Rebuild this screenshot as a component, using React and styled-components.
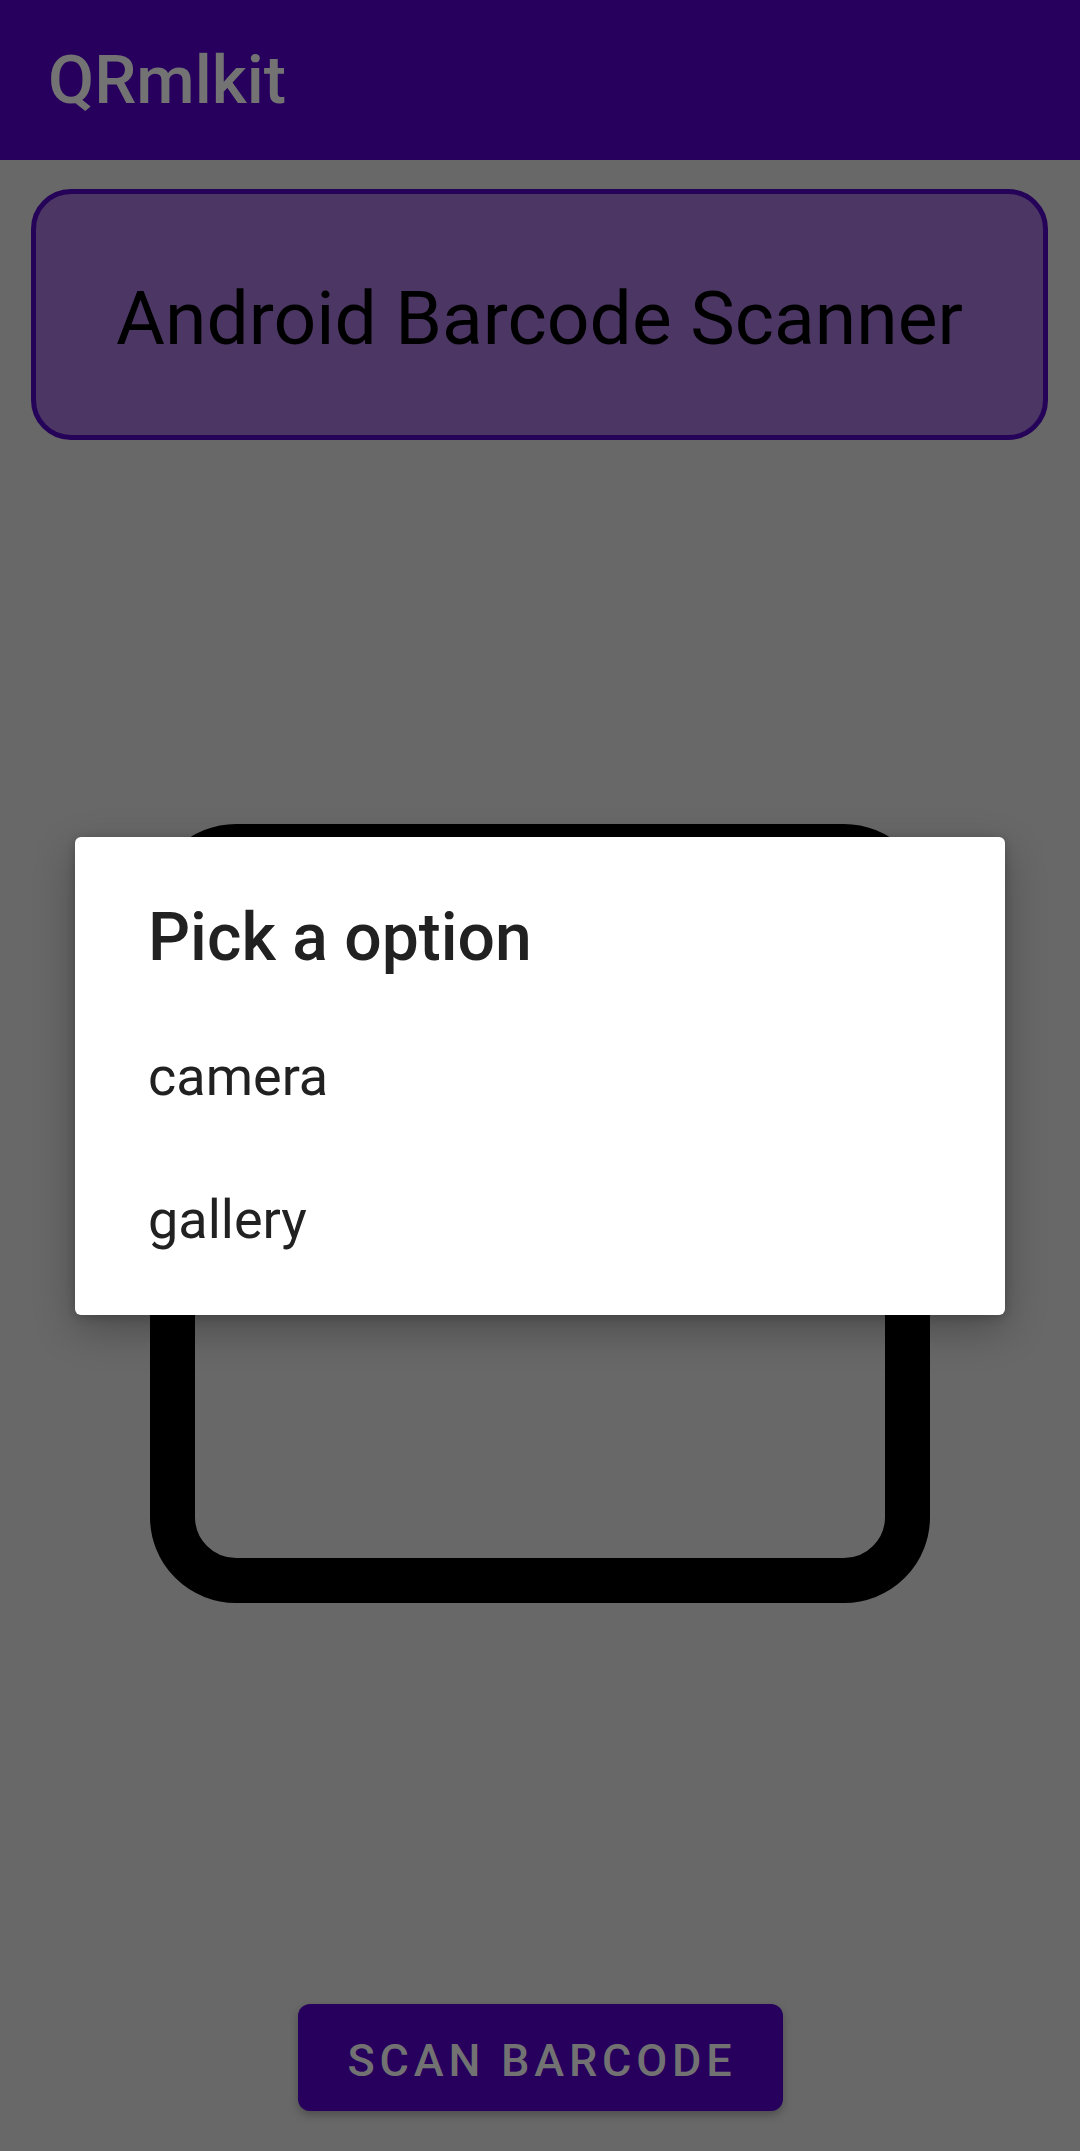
import React from "react";
import styled, { createGlobalStyle } from "styled-components";

const Global = createGlobalStyle`
  html, body { margin: 0; padding: 0; }
  body {
    background: #686868;
    font-family: Roboto, "Noto Sans", "Liberation Sans", sans-serif;
    -webkit-font-smoothing: antialiased;
  }
  * { box-sizing: border-box; }
`;

const Page = styled.div`
  position: relative;
  width: 1080px;
  height: 2151px;
  background: #686868;
  display: flex;
  flex-direction: column;
  overflow: hidden;
`;

const AppBar = styled.header`
  height: 160px;
  background: #27005e;
  display: flex;
  align-items: center;
  padding-left: 48px;
  flex-shrink: 0;
`;

const AppTitle = styled.h1`
  margin: 0;
  font-size: 67px;
  font-weight: 500;
  line-height: 160px;
  color: #737373;
`;

const Main = styled.main`
  display: flex;
  flex-direction: column;
  align-items: center;
`;

const HeaderCard = styled.div`
  margin: 29px 32px 0 31px;
  align-self: stretch;
  height: 251px;
  border: 5px solid #250359;
  border-radius: 40px;
  background: #4b3664;
  display: flex;
  align-items: center;
  justify-content: center;
`;

const HeaderText = styled.div`
  font-size: 75px;
  font-weight: 400;
  color: #000;
  padding-top: 6px;
`;

const ScanFrame = styled.div`
  margin-top: 384px;
  width: 780px;
  height: 779px;
  border: 45px solid #000;
  border-radius: 86px;
`;

const ScanButton = styled.button`
  margin-top: 401px;
  width: 485px;
  height: 107px;
  border: none;
  border-radius: 12px;
  background: #27005e;
  color: #727272;
  font-family: Roboto, "Liberation Sans", sans-serif;
  font-size: 45px;
  font-weight: 500;
  letter-spacing: 4.8px;
  text-transform: uppercase;
  padding: 6px 0 0 4px;
  box-shadow: 0 4px 8px rgba(0, 0, 0, 0.25);
`;

const Overlay = styled.div`
  position: absolute;
  inset: 0;
  display: flex;
  align-items: center;
  justify-content: center;
`;

const Dialog = styled.div`
  width: 930px;
  height: 478px;
  background: #fff;
  border-radius: 6px;
  box-shadow: 0 14px 40px rgba(0, 0, 0, 0.28), 0 2px 10px rgba(0, 0, 0, 0.2);
  padding: 61px 0 24px 0;
  display: flex;
  flex-direction: column;
`;

const DialogTitle = styled.h2`
  margin: 0 0 27px 0;
  padding-left: 73px;
  font-size: 66px;
  font-weight: 500;
  line-height: 80px;
  color: #212121;
`;

const OptionItem = styled.div`
  padding-left: 73px;
  font-size: 54px;
  font-weight: 400;
  line-height: 143px;
  height: 143px;
  color: #212121;
`;

export default function App() {
  return (
    <>
      <Global />
      <Page>
        <AppBar>
          <AppTitle>QRmlkit</AppTitle>
        </AppBar>
        <Main>
          <HeaderCard>
            <HeaderText>Android Barcode Scanner</HeaderText>
          </HeaderCard>
          <ScanFrame />
          <ScanButton>Scan Barcode</ScanButton>
        </Main>
        <Overlay>
          <Dialog>
            <DialogTitle>Pick a option</DialogTitle>
            <OptionItem>camera</OptionItem>
            <OptionItem>gallery</OptionItem>
          </Dialog>
        </Overlay>
      </Page>
    </>
  );
}
